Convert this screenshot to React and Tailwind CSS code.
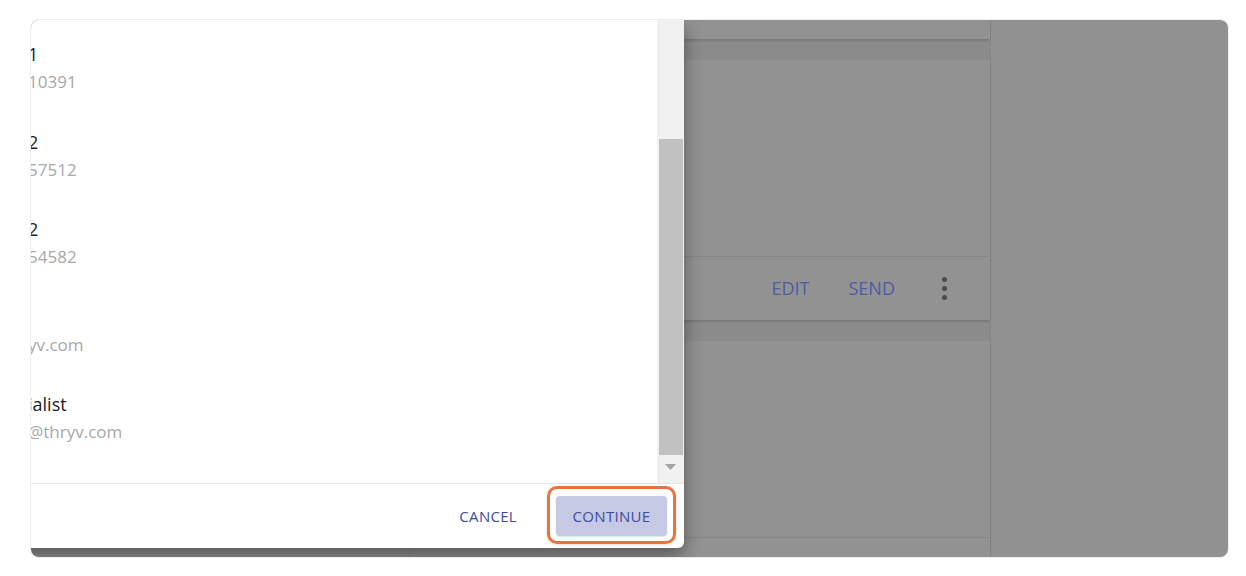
import React from 'react';

const rows = [
  { title: '1', sub: '10391' },
  { title: '2', sub: '57512' },
  { title: '2', sub: '54582' },
  { title: '', sub: 'yv.com' },
  { title: 'ialist', sub: '@thryv.com' },
];

function BackdropCards() {
  return (
    <div className="absolute inset-0 flex bg-[#919191]">
      <div className="ml-[380px] w-[580px] h-full bg-[#8b8b8b] flex flex-col gap-[21px] border-r border-[#878787]">
        {/* card peeking at the top */}
        <div className="h-[19px] bg-[#929292] shadow-[0_2px_2px_rgba(0,0,0,0.12)]" />

        {/* card with actions */}
        <div className="h-[260px] bg-[#929292] flex flex-col shadow-[0_2px_2px_rgba(0,0,0,0.12)]">
          <div className="flex-1" />
          <div className="h-[64px] border-t border-[#878787] flex items-center justify-end pr-[40px]">
            <span className="text-[18px] text-[#4d5ba2] mr-[39px]">EDIT</span>
            <span className="text-[18px] text-[#4d5ba2] mr-[43px]">SEND</span>
            <div className="w-[12px] flex flex-col items-center gap-[4px]">
              <span className="w-[5px] h-[5px] rounded-full bg-[#4b4b4b]" />
              <span className="w-[5px] h-[5px] rounded-full bg-[#4b4b4b]" />
              <span className="w-[5px] h-[5px] rounded-full bg-[#4b4b4b]" />
            </div>
          </div>
        </div>

        {/* next card */}
        <div className="flex-1 bg-[#929292] flex flex-col shadow-[0_2px_2px_rgba(0,0,0,0.12)]">
          <div className="h-[196px]" />
          <div className="flex-1 border-t border-[#878787]" />
        </div>
      </div>
    </div>
  );
}

function Scrollbar() {
  return (
    <div className="w-[27px] bg-[#f1f1f1] flex flex-col items-start shrink-0">
      <div className="h-[119px]" />
      <div className="ml-[2px] w-[24px] h-[316px] bg-[#c1c1c1]" />
      <div className="w-full flex justify-center mt-[9px]">
        <svg width="11" height="6" viewBox="0 0 11 6">
          <path d="M0 0 L11 0 L5.5 6 Z" fill="#a3a3a3" />
        </svg>
      </div>
    </div>
  );
}

export default function App() {
  return (
    <div
      className="w-[1246px] h-[576px] bg-white pt-[19px] pl-[30px]"
      style={{ fontFamily: '"Open Sans", "Liberation Sans", sans-serif' }}
    >
      <div className="relative w-[1199px] h-[539px] border border-[#ececf2] rounded-[9px] overflow-hidden">
        <BackdropCards />

        {/* Dialog */}
        <div className="absolute top-0 left-[-20px] w-[673px] h-[528px] bg-white rounded-b-[6px] flex flex-col shadow-[0_8px_18px_rgba(0,0,0,0.4)]">
          <div className="flex-1 min-h-0 flex">
            <div className="flex-1 pl-[17px] pt-[4px] overflow-hidden">
              {rows.map((r, i) => (
                <div key={i} className="h-[87.5px] pt-[18px]">
                  <div className="text-[18px] leading-[24px] h-[24px] text-[#222222]">{r.title}</div>
                  <div className="text-[17px] leading-[24px] mt-[4px] text-[#a8a8a8]">{r.sub}</div>
                </div>
              ))}
            </div>
            <Scrollbar />
          </div>

          <div className="h-[65px] border-t border-[#e6e6e6] flex items-center justify-end pr-[17px] shrink-0">
            <button className="h-[40px] px-4 mr-[23px] text-[15px] text-[#3f4b9f] tracking-[0.3px]">
              CANCEL
            </button>
            <div className="relative">
              <div className="absolute -left-[9px] -right-[9px] -top-[10px] -bottom-[8px] border-[3px] border-[#e9733f] rounded-[10px] shadow-[0_1px_3px_rgba(0,0,0,0.15)]" />
              <button className="relative h-[40px] w-[111px] rounded-[4px] bg-[#c6c9e4] text-[15px] text-[#3f4b9f] tracking-[0.3px] shadow-[0_1px_2px_rgba(0,0,0,0.12)]">
                CONTINUE
              </button>
            </div>
          </div>
        </div>
      </div>
    </div>
  );
}
